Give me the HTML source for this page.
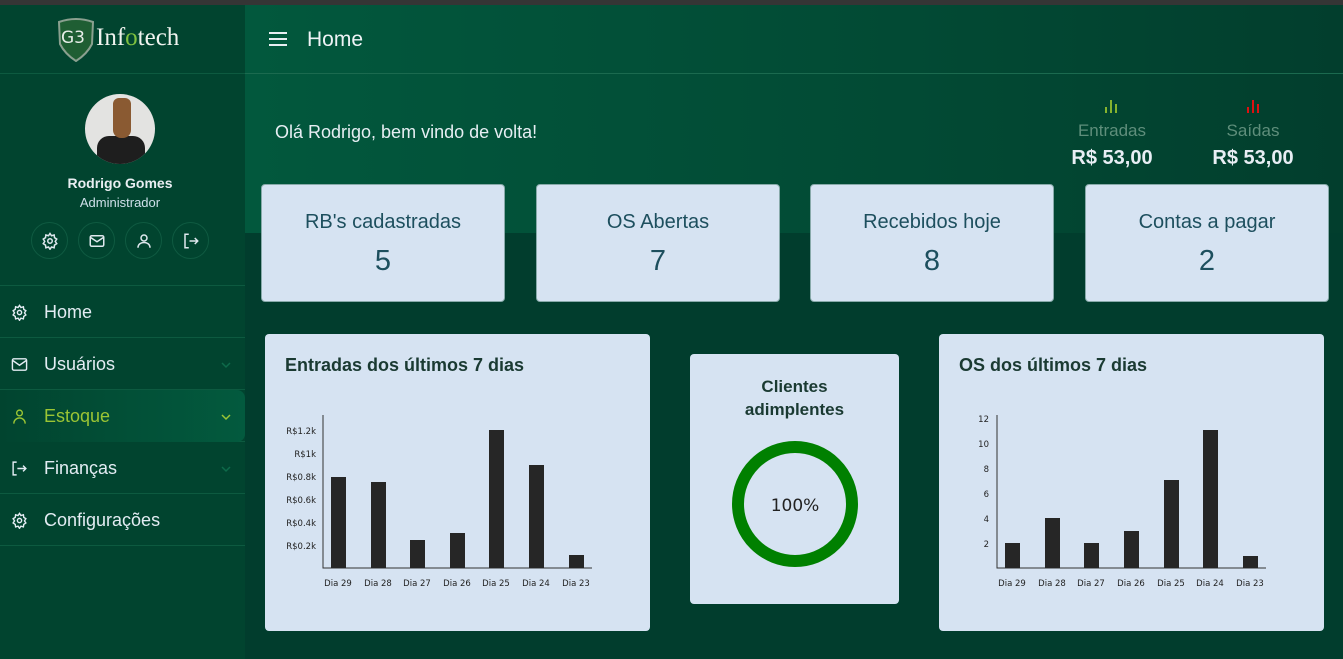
<!DOCTYPE html>
<html><head><meta charset="utf-8"><style>
*{box-sizing:border-box;margin:0;padding:0}
body{width:1343px;height:659px;overflow:hidden;background:#013d2d;font-family:"Liberation Sans",Roboto,sans-serif;position:relative}
.abs{position:absolute}
.top{left:0;top:0;width:1343px;height:5px;background:#353535}
.side{left:0;top:5px;width:245px;height:654px;background:#01442f}
.hdr{left:245px;top:5px;width:1098px;height:228px;background:linear-gradient(90deg,#02583d,#024a34 60%,#023e2d)}
.hline{left:245px;top:73px;width:1098px;height:1px;background:#1b6a4f}
.sline{left:0;height:1px;width:245px;background:#0d5a40}
.card{background:#d6e3f2;border-radius:4px}
.stat{top:184px;height:118px;border:1px solid #8aa;text-align:center;color:#1d4f5e}
.stat .t{position:absolute;top:26px;width:100%;font-size:20px}
.stat .n{position:absolute;top:60px;width:100%;font-size:29px}
.menu{left:0;width:245px;height:51px;color:#e3ecf3;font-size:18px}
.menu span{position:absolute;left:44px;top:16px}
.menu svg{position:absolute;left:11px;top:18px}
.menu .ch{position:absolute;left:220px;top:21px}
.ib{top:222px;width:37px;height:37px;border:1px solid #0f5a41;border-radius:50%}
.ib svg{position:absolute;left:9px;top:9px}
.ct{font-size:18px;font-weight:bold;color:#1a3a32}
svg text{font-family:"DejaVu Sans",sans-serif}
</style></head><body>
<div class="abs top"></div>
<div class="abs side"></div>
<div class="abs hdr"></div>
<div class="abs hline"></div>
<div class="abs sline" style="top:73px"></div>
<div class="abs sline" style="top:285px"></div>
<div class="abs sline" style="top:337px"></div>
<div class="abs sline" style="top:389px"></div>
<div class="abs sline" style="top:441px"></div>
<div class="abs sline" style="top:493px"></div>
<div class="abs sline" style="top:545px"></div>

<!-- logo -->
<svg class="abs" style="left:56px;top:16px" width="40" height="46" viewBox="0 0 40 46"><path d="M3 6 Q20 0 37 6 L36 28 Q31 38 20 45 Q9 38 4 28Z" fill="#1f5e33" stroke="#8aa08f" stroke-width="2"/><text x="5" y="27" font-size="17" fill="#e8eee8" font-family="Liberation Serif">G3</text></svg>
<div class="abs" style="left:96px;top:24px;font-family:'Liberation Serif',serif;font-size:25px;color:#f0f3ef">Inf<span style="color:#7fc040">o</span>tech</div>

<!-- avatar -->
<div class="abs" style="left:85px;top:94px;width:70px;height:70px;border-radius:50%;background:#e3e3e1;overflow:hidden">
<div class="abs" style="left:12px;top:42px;width:48px;height:30px;background:#1e1e1e;border-radius:12px 12px 0 0"></div>
<div class="abs" style="left:28px;top:4px;width:18px;height:40px;background:#8a5a32;border-radius:6px 6px 8px 8px"></div>
</div>
<div class="abs" style="left:0;width:240px;top:175px;text-align:center;color:#e9eef2;font-weight:bold;font-size:14px">Rodrigo Gomes</div>
<div class="abs" style="left:0;width:240px;top:195px;text-align:center;color:#cfe0ea;font-size:13px">Administrador</div>
<div class="abs ib" style="left:31px"><svg width="18" height="18" viewBox="0 0 24 24" fill="none" stroke="#dfe8ee" stroke-width="2"><circle cx="12" cy="12" r="3"/><path d="M12 2l2 3 3.5-1 .5 3.5 3 2-2 3 2 3-3 2-.5 3.5-3.5-1-2 3-2-3-3.5 1-.5-3.5-3-2 2-3-2-3 3-2 .5-3.5 3.5 1z"/></svg></div>
<div class="abs ib" style="left:78px"><svg width="18" height="18" viewBox="0 0 24 24" fill="none" stroke="#dfe8ee" stroke-width="2"><rect x="3" y="5" width="18" height="14" rx="2"/><path d="M3 7l9 6 9-6"/></svg></div>
<div class="abs ib" style="left:125px"><svg width="18" height="18" viewBox="0 0 24 24" fill="none" stroke="#dfe8ee" stroke-width="2"><circle cx="12" cy="8" r="4"/><path d="M4 21c0-5 4-7 8-7s8 2 8 7"/></svg></div>
<div class="abs ib" style="left:172px"><svg width="18" height="18" viewBox="0 0 24 24" fill="none" stroke="#dfe8ee" stroke-width="2"><path d="M9 3H4v18h5M10 12h11M17 8l4 4-4 4"/></svg></div>

<!-- menu -->
<div class="abs menu" style="top:286px"><svg width="17" height="17" viewBox="0 0 24 24" fill="none" stroke="#e3ecf3" stroke-width="2"><circle cx="12" cy="12" r="3"/><path d="M12 2l2 3 3.5-1 .5 3.5 3 2-2 3 2 3-3 2-.5 3.5-3.5-1-2 3-2-3-3.5 1-.5-3.5-3-2 2-3-2-3 3-2 .5-3.5 3.5 1z"/></svg><span>Home</span></div>
<div class="abs menu" style="top:338px"><svg width="17" height="17" viewBox="0 0 24 24" fill="none" stroke="#e3ecf3" stroke-width="2"><rect x="2" y="4" width="20" height="16" rx="2"/><path d="M2 6l10 7 10-7"/></svg><span>Usuários</span><svg class="ch" width="12" height="12" viewBox="0 0 12 12"><path d="M2 4l4 4 4-4" fill="none" stroke="#0e6a4a" stroke-width="1.5"/></svg></div>
<div class="abs menu" style="top:390px;width:245px;height:52px;border-radius:0 8px 8px 0;background:linear-gradient(90deg,#01442f,#035a3e);color:#9bc534"><svg width="17" height="17" viewBox="0 0 24 24" fill="none" stroke="#9bc534" stroke-width="2"><circle cx="12" cy="7" r="4"/><path d="M4 22c0-5 4-8 8-8s8 3 8 8"/></svg><span>Estoque</span><svg class="ch" width="12" height="12" viewBox="0 0 12 12"><path d="M2 4l4 4 4-4" fill="none" stroke="#9bc534" stroke-width="1.5"/></svg></div>
<div class="abs menu" style="top:442px"><svg width="17" height="17" viewBox="0 0 24 24" fill="none" stroke="#e3ecf3" stroke-width="2"><path d="M8 3H3v18h5M9 12h12M17 8l4 4-4 4"/></svg><span>Finanças</span><svg class="ch" width="12" height="12" viewBox="0 0 12 12"><path d="M2 4l4 4 4-4" fill="none" stroke="#0e6a4a" stroke-width="1.5"/></svg></div>
<div class="abs menu" style="top:494px"><svg width="17" height="17" viewBox="0 0 24 24" fill="none" stroke="#e3ecf3" stroke-width="2"><circle cx="12" cy="12" r="3"/><path d="M12 2l2 3 3.5-1 .5 3.5 3 2-2 3 2 3-3 2-.5 3.5-3.5-1-2 3-2-3-3.5 1-.5-3.5-3-2 2-3-2-3 3-2 .5-3.5 3.5 1z"/></svg><span>Configurações</span></div>

<!-- header -->
<svg class="abs" style="left:269px;top:31px" width="18" height="16" viewBox="0 0 18 16"><path d="M0 2h18M0 8h18M0 14h18" stroke="#e8eef2" stroke-width="2"/></svg>
<div class="abs" style="left:307px;top:28px;font-size:21px;color:#eef3f6">Home</div>
<div class="abs" style="left:275px;top:122px;font-size:18px;color:#e6eef3">Olá Rodrigo, bem vindo de volta!</div>
<svg class="abs" style="left:1104px;top:98px" width="14" height="15"><path d="M2 15V9M7 15V2M12 15V6" stroke="#86b32e" stroke-width="2"/></svg>
<svg class="abs" style="left:1246px;top:98px" width="14" height="15"><path d="M2 15V9M7 15V2M12 15V6" stroke="#dd1111" stroke-width="2"/></svg>
<div class="abs" style="left:1062px;width:100px;top:121px;text-align:center;color:#5f8e7b;font-size:17px">Entradas</div>
<div class="abs" style="left:1203px;width:100px;top:121px;text-align:center;color:#5f8e7b;font-size:17px">Saídas</div>
<div class="abs" style="left:1052px;width:120px;top:147px;text-align:center;color:#e8eef4;font-size:20px;font-weight:bold">R$ 53,00</div>
<div class="abs" style="left:1193px;width:120px;top:147px;text-align:center;color:#e8eef4;font-size:20px;font-weight:bold">R$ 53,00</div>

<!-- stats -->
<div class="abs card stat" style="left:261px;width:244px"><div class="t">RB's cadastradas</div><div class="n">5</div></div>
<div class="abs card stat" style="left:536px;width:244px"><div class="t">OS Abertas</div><div class="n">7</div></div>
<div class="abs card stat" style="left:810px;width:244px"><div class="t">Recebidos hoje</div><div class="n">8</div></div>
<div class="abs card stat" style="left:1085px;width:244px"><div class="t">Contas a pagar</div><div class="n">2</div></div>

<!-- chart 1 -->
<div class="abs card" style="left:265px;top:334px;width:385px;height:297px"></div>
<div class="abs ct" style="left:285px;top:355px">Entradas dos últimos 7 dias</div>
<svg class="abs" style="left:265px;top:334px" width="385" height="297">
<g font-size="8.5" fill="#222" text-anchor="end"><text x="51" y="100">R$1.2k</text><text x="51" y="123">R$1k</text><text x="51" y="146">R$0.8k</text><text x="51" y="169">R$0.6k</text><text x="51" y="192">R$0.4k</text><text x="51" y="215">R$0.2k</text></g>
<path d="M58 81V234H327" stroke="#333" fill="none"/>
<g fill="#262626"><rect x="66" y="143" width="15" height="91"/><rect x="106" y="148" width="15" height="86"/><rect x="145" y="206" width="15" height="28"/><rect x="185" y="199" width="15" height="35"/><rect x="224" y="96" width="15" height="138"/><rect x="264" y="131" width="15" height="103"/><rect x="304" y="221" width="15" height="13"/></g>
<g font-size="8.5" fill="#222" text-anchor="middle"><text x="73" y="252">Dia 29</text><text x="113" y="252">Dia 28</text><text x="152" y="252">Dia 27</text><text x="192" y="252">Dia 26</text><text x="231" y="252">Dia 25</text><text x="271" y="252">Dia 24</text><text x="311" y="252">Dia 23</text></g>
</svg>

<!-- donut -->
<div class="abs card" style="left:690px;top:354px;width:209px;height:250px"></div>
<div class="abs" style="left:690px;width:209px;top:375px;text-align:center;font-size:17px;font-weight:bold;color:#1a3a32;line-height:23px">Clientes<br>adimplentes</div>
<svg class="abs" style="left:690px;top:354px" width="209" height="250"><circle cx="105" cy="150" r="57" fill="none" stroke="#008000" stroke-width="12"/><text x="105" y="157" font-size="17" text-anchor="middle" fill="#222">100%</text></svg>

<!-- chart 3 -->
<div class="abs card" style="left:939px;top:334px;width:385px;height:297px"></div>
<div class="abs ct" style="left:959px;top:355px">OS dos últimos 7 dias</div>
<svg class="abs" style="left:939px;top:334px" width="385" height="297">
<g font-size="8.5" fill="#222" text-anchor="end"><text x="50" y="88">12</text><text x="50" y="113">10</text><text x="50" y="138">8</text><text x="50" y="163">6</text><text x="50" y="188">4</text><text x="50" y="213">2</text></g>
<path d="M58 81V234H327" stroke="#333" fill="none"/>
<g fill="#262626"><rect x="66" y="209" width="15" height="25"/><rect x="106" y="184" width="15" height="50"/><rect x="145" y="209" width="15" height="25"/><rect x="185" y="197" width="15" height="37"/><rect x="225" y="146" width="15" height="88"/><rect x="264" y="96" width="15" height="138"/><rect x="304" y="222" width="15" height="12"/></g>
<g font-size="8.5" fill="#222" text-anchor="middle"><text x="73" y="252">Dia 29</text><text x="113" y="252">Dia 28</text><text x="152" y="252">Dia 27</text><text x="192" y="252">Dia 26</text><text x="232" y="252">Dia 25</text><text x="271" y="252">Dia 24</text><text x="311" y="252">Dia 23</text></g>
</svg>
</body></html>
